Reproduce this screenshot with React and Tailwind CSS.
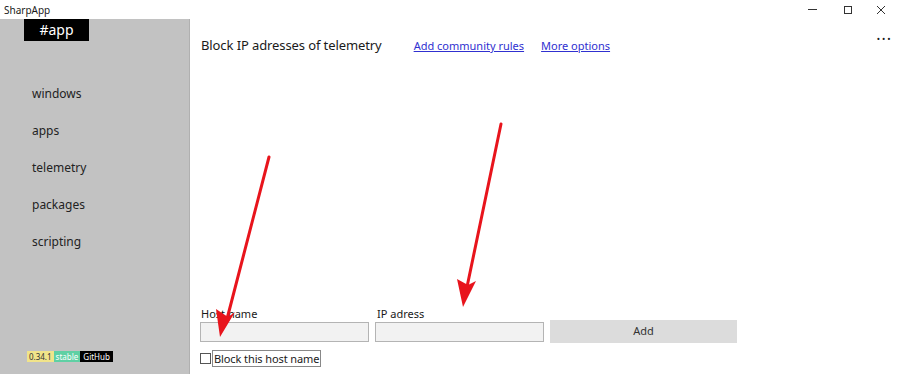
import React from 'react';

const navItems = ['windows', 'apps', 'telemetry', 'packages', 'scripting'];

const App = () => {
  return (
    <div
      className="w-[900px] h-[374px] bg-white flex flex-col overflow-hidden text-[#1a1a1a]"
      style={{ fontFamily: '"Noto Sans", "Open Sans", sans-serif' }}
    >
      {/* Title bar */}
      <div className="h-[19px] flex items-center justify-between bg-white">
        <span className="pl-[4px] text-[10px] leading-none">SharpApp</span>
        <div className="flex items-center h-full">
          <span className="w-[35px] flex justify-center">
            <span className="block w-[9px] h-px bg-[#333]" />
          </span>
          <span className="w-[35px] flex justify-center">
            <span className="block w-[8px] h-[8px] border border-[#333]" />
          </span>
          <span className="w-[35px] flex justify-center pr-[4px]">
            <svg width="10" height="10" viewBox="0 0 10 10" stroke="#333" strokeWidth="1">
              <path d="M1 1 L9 9 M9 1 L1 9" />
            </svg>
          </span>
        </div>
      </div>

      <div className="flex flex-1 min-h-0">
        {/* Sidebar */}
        <aside className="w-[190px] bg-[#c2c2c2] border-r border-[#b0b0b0] flex flex-col">
          <div className="ml-[24px] w-[65px] h-[22px] bg-black text-white text-[14px] leading-none flex items-center justify-center">
            #app
          </div>
          <nav className="flex flex-col mt-[43px] pl-[32px] gap-[18px]">
            {navItems.map((item) => (
              <span key={item} className="text-[12px] leading-[19px] text-[#222]">
                {item}
              </span>
            ))}
          </nav>
          <div className="mt-auto mb-[12px] ml-[27px] flex text-[8px] leading-[11px]">
            <span className="bg-[#f1e48a] px-[2px] text-[#333]">0.34.1</span>
            <span className="bg-[#5fd0a4] px-[2px] text-white">stable</span>
            <span className="bg-black px-[3px] text-white">GitHub</span>
          </div>
        </aside>

        {/* Main */}
        <main className="flex-1 relative flex flex-col pl-[10px]">
          <div className="flex items-baseline mt-[16px] pl-[1px]">
            <h1 className="text-[13px] leading-[20px] font-normal tracking-[-0.1px]">
              Block IP adresses of telemetry
            </h1>
            <a href="#" className="ml-[32px] text-[11px] text-[#3030d0] underline">
              Add community rules
            </a>
            <a href="#" className="ml-[17px] text-[11px] text-[#3030d0] underline">
              More options
            </a>
            <span className="ml-auto mr-[8px] text-[16px] leading-none tracking-[1px] self-start -mt-[9px]">
              ...
            </span>
          </div>

          <div className="mt-auto mb-[7px] flex flex-col">
            <div className="flex items-end gap-[6px]">
              <label className="flex flex-col w-[169px]">
                <span className="text-[11px] leading-[16px] pl-[1px]">Host name</span>
                <input className="h-[20px] bg-[#f2f2f2] border border-[#b4b4b4] outline-none" />
              </label>
              <label className="flex flex-col w-[169px]">
                <span className="text-[11px] leading-[16px] pl-[2px]">IP adress</span>
                <input className="h-[20px] bg-[#f2f2f2] border border-[#b4b4b4] outline-none" />
              </label>
              <button className="w-[187px] h-[23px] bg-[#dcdcdc] text-[11px] text-[#333] mb-[-1px]">
                Add
              </button>
            </div>
            <label className="flex items-center mt-[8px]">
              <span className="w-[11px] h-[11px] border border-[#555] bg-white" />
              <span className="ml-[1px] border border-[#888] px-[1px] text-[11px] leading-[15px] tracking-[-0.1px]">
                Block this host name
              </span>
            </label>
          </div>

          {/* annotation arrows */}
          <svg className="absolute left-0 top-0 pointer-events-none" width="710" height="355">
            <g stroke="#e8141c" strokeWidth="3" strokeLinecap="round">
              <line x1="79" y1="138" x2="37" y2="300" />
              <line x1="311" y1="105" x2="277" y2="268" />
            </g>
            <g fill="#e8141c">
              <polygon points="30,318 26,290 38,298 45,293" />
              <polygon points="273,288 267,260 278,266 286,262" />
            </g>
          </svg>
        </main>
      </div>
    </div>
  );
};

export default App;
